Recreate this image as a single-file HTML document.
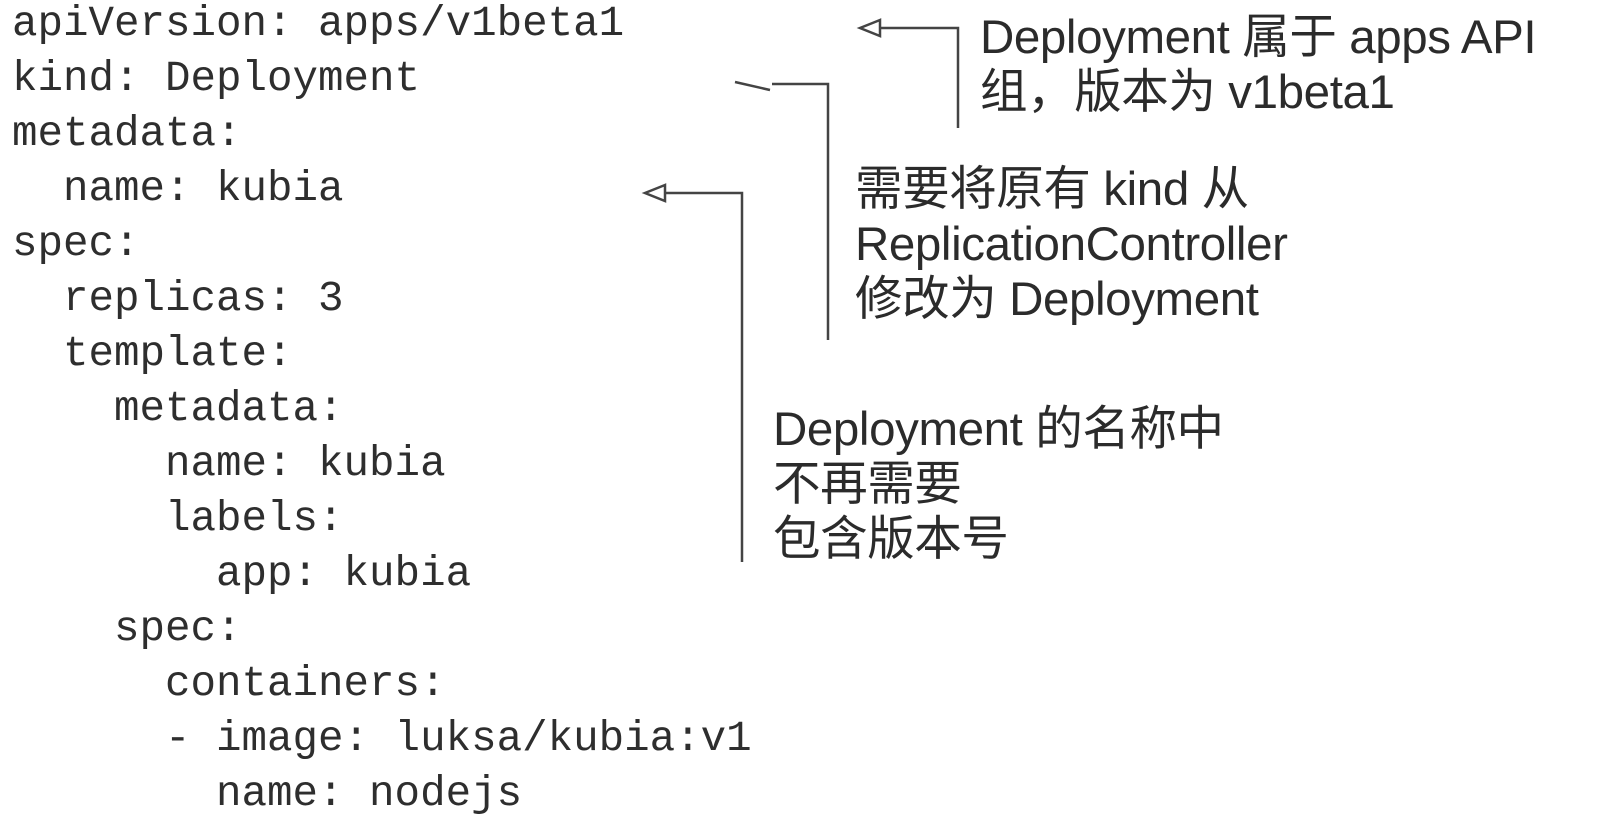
<!DOCTYPE html>
<html><head><meta charset="utf-8"><style>
body{margin:0;width:1602px;height:840px;background:#fff;position:relative;overflow:hidden}
.c{position:absolute;left:12px;top:0;font-family:"Liberation Mono",monospace;font-size:42.5px;color:#2e2e2e;line-height:55px;white-space:pre;margin:0}
.a{position:absolute;font-family:"Liberation Sans","Noto Sans CJK SC",sans-serif;font-size:47.5px;color:#2b2b2b;line-height:55px;white-space:pre;letter-spacing:-0.4px}
</style></head><body>
<pre class="c" style="top:-3px">apiVersion: apps/v1beta1
kind: Deployment
metadata:
  name: kubia
spec:
  replicas: 3
  template:
    metadata:
      name: kubia
      labels:
        app: kubia
    spec:
      containers:
      - image: luksa/kubia:v1
        name: nodejs</pre>
<div class="a" style="left:980px;top:10px">Deployment 属于 apps API
组，版本为 v1beta1</div>
<div class="a" style="left:855px;top:162px">需要将原有 kind 从
ReplicationController
修改为 Deployment</div>
<div class="a" style="left:773px;top:402px">Deployment 的名称中
不再需要
包含版本号</div>
<svg width="1602" height="840" style="position:absolute;left:0;top:0" fill="none" stroke="#444" stroke-width="2.5">
<path d="M880 20 L860 28 L880 36 Z M880 28 H958 V128"/>
<path d="M735 82 L770 90 M772 84 H828 V340"/>
<path d="M665 185 L645 193 L665 201 Z M665 193 H742 V562"/>
</svg>
</body></html>
